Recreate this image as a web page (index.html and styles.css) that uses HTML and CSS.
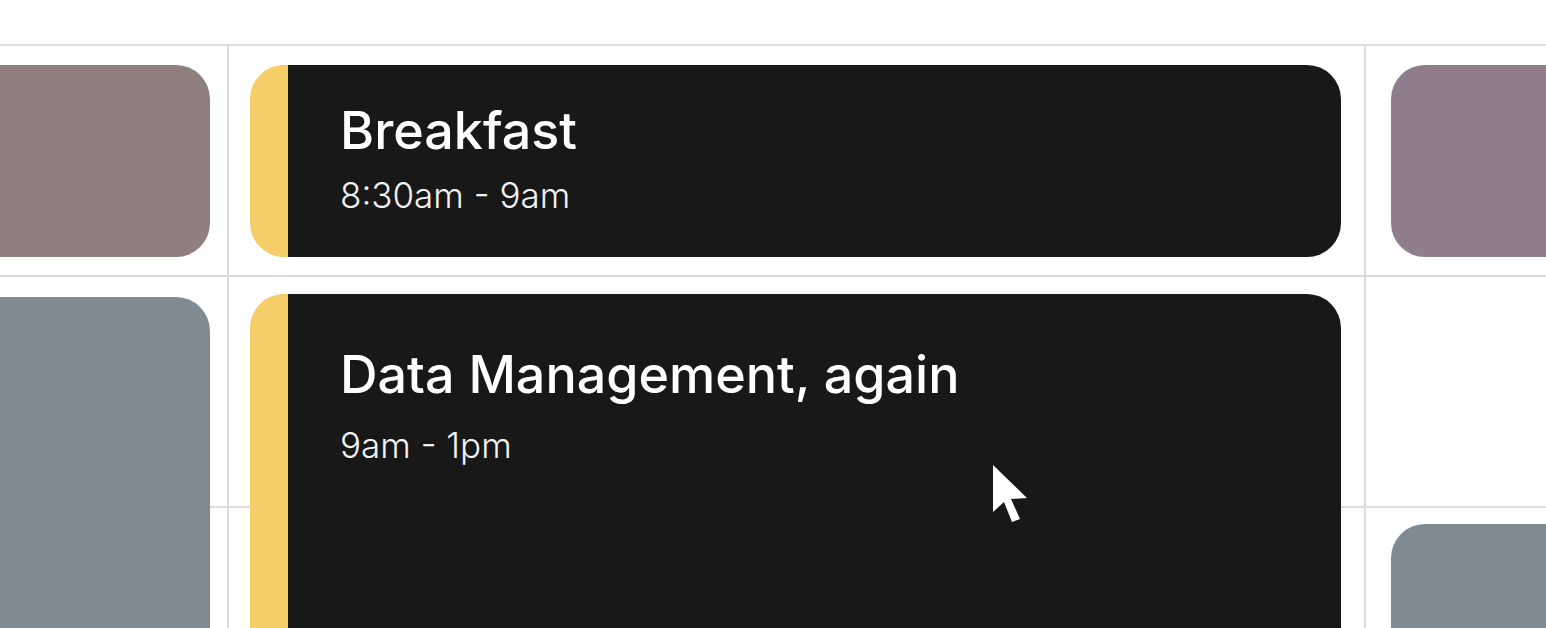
FILE: index.html
```html
<!DOCTYPE html>
<html lang="en">
<head>
    <meta charset="UTF-8">
    <meta name="viewport" content="width=device-width, initial-scale=1.0">
    <title>Week view</title>
    <link rel="stylesheet" href="styles.css">
</head>
<body>
    <div class="top-bar"></div>

    <div class="calendar">
        <!-- background cells -->
        <div class="cell c1 r1"></div>
        <div class="cell c2 r1"></div>
        <div class="cell c3 r1"></div>
        <div class="cell c1 r2"></div>
        <div class="cell c2 r2"></div>
        <div class="cell c3 r2"></div>
        <div class="cell c1 r3"></div>
        <div class="cell c2 r3"></div>
        <div class="cell c3 r3"></div>

        <!-- events -->
        <div class="event ev-brown"></div>
        <div class="event ev-slate-left"></div>

        <div class="event event-active ev-breakfast">
            <div class="event-title">Breakfast</div>
            <div class="event-time">8:30am - 9am</div>
        </div>

        <div class="event event-active ev-data">
            <div class="event-title">Data Management, again</div>
            <div class="event-time">9am - 1pm</div>
            <svg class="cursor" width="38" height="60" viewBox="0 0 38 60">
                <path d="M1 1 L1 48 L12 38 L20 58 L28 55 L19 35 L35 34 Z" fill="#fff"/>
            </svg>
        </div>

        <div class="event ev-mauve"></div>
        <div class="event ev-slate-right"></div>
    </div>
</body>
</html>
```

FILE: styles.css
```css
body {
    margin: 0;
    padding: 0;
    background: #fff;
    font-family: Inter, "Noto Sans", sans-serif;
    overflow: hidden;
    height: 628px;
}

.top-bar {
    height: 44px;
}

.calendar {
    display: grid;
    grid-template-columns: 227px 1135px 1fr;
    grid-template-rows: repeat(3, 229px);
    gap: 2px;
    background: #dcdcdc;
    border-top: 2px solid #dcdcdc;
}

.cell {
    background: #fff;
}

.c1 { grid-column: 1; }
.c2 { grid-column: 2; }
.c3 { grid-column: 3; }
.r1 { grid-row: 1; }
.r2 { grid-row: 2; }
.r3 { grid-row: 3; }

.event {
    border-radius: 34px;
    align-self: start;
}

.ev-brown {
    grid-column: 1;
    grid-row: 1;
    height: 192px;
    margin: 19px 17px 0 -40px;
    background: #8f7f7e;
}

.ev-slate-left {
    grid-column: 1;
    grid-row: 2 / span 2;
    height: 420px;
    margin: 20px 17px 0 -40px;
    background: #7f8b92;
}

.ev-mauve {
    grid-column: 3;
    grid-row: 1;
    height: 192px;
    margin: 19px -40px 0 25px;
    background: #8f7d8c;
}

.ev-slate-right {
    grid-column: 3;
    grid-row: 3;
    height: 200px;
    margin: 16px -40px 0 25px;
    background: #7f8b92;
}

.event-active {
    grid-column: 2;
    background: #181818;
    border-left: 38px solid #f5cd69;
    color: #fff;
    padding-left: 52px;
    box-sizing: border-box;
    position: relative;
}

.ev-breakfast {
    grid-row: 1;
    height: 192px;
    margin: 19px 23px 0 21px;
    padding-top: 35px;
}

.ev-data {
    grid-row: 2 / span 2;
    height: 420px;
    margin: 17px 23px 0 21px;
    padding-top: 50px;
}

.event-title {
    font-size: 52px;
    font-weight: 500;
    line-height: 1.2;
}

.event-time {
    margin-top: 12px;
    font-size: 35px;
    font-weight: 300;
    line-height: 1.2;
    color: #f2f2f2;
}

.ev-data .event-time {
    margin-top: 18px;
}

.cursor {
    position: absolute;
    left: 704px;
    top: 170px;
}
```
